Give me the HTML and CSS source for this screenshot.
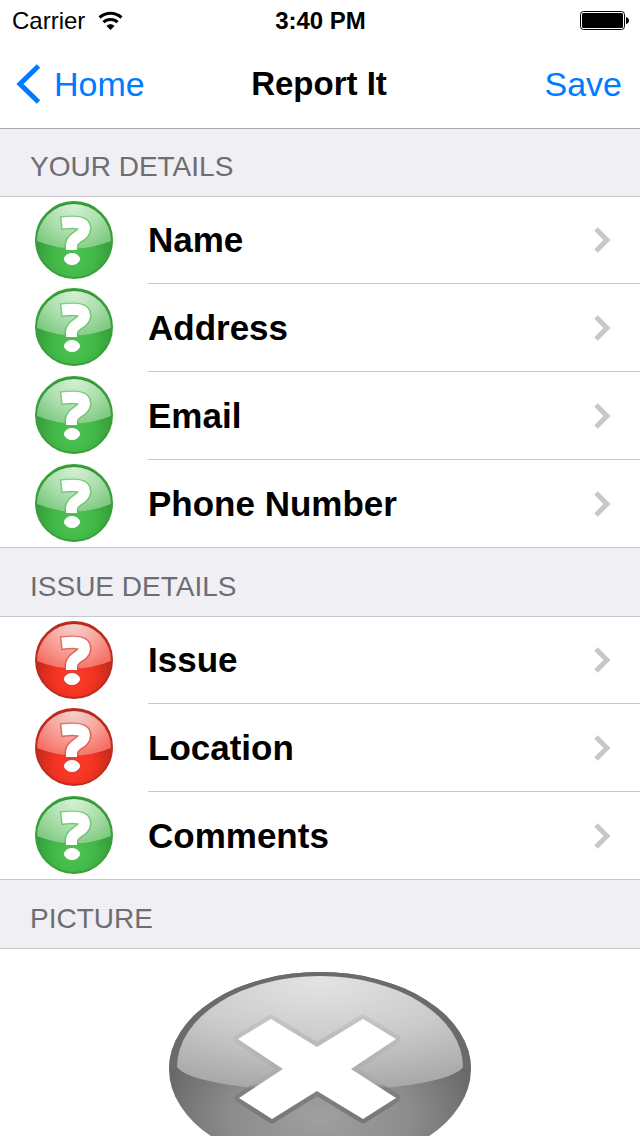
FILE: index.html
```
<!DOCTYPE html>
<html lang="en">
<head>
    <meta charset="UTF-8">
    <meta name="viewport" content="width=device-width, initial-scale=1.0">
    <title>Report It</title>
    <link rel="stylesheet" href="styles.css">
</head>
<body>
    <!-- Shared icons -->
    <svg class="defs" aria-hidden="true">
        <defs>
            <radialGradient id="greenBody" cx="50%" cy="72%" r="62%">
                <stop offset="0" stop-color="#4cc552"/>
                <stop offset="0.400" stop-color="#44ba49"/>
                <stop offset="1" stop-color="#2f9233"/>
            </radialGradient>
            <radialGradient id="greenGloss" gradientUnits="userSpaceOnUse" cx="39" cy="4" r="52">
                <stop offset="0" stop-color="#d5f1d5"/>
                <stop offset="0.500" stop-color="#aee0ae"/>
                <stop offset="1" stop-color="#78c67a"/>
            </radialGradient>
            <radialGradient id="redBody" cx="50%" cy="72%" r="62%">
                <stop offset="0" stop-color="#ff3d2a"/>
                <stop offset="0.400" stop-color="#f43322"/>
                <stop offset="1" stop-color="#b02619"/>
            </radialGradient>
            <radialGradient id="redGloss" gradientUnits="userSpaceOnUse" cx="39" cy="2" r="52">
                <stop offset="0" stop-color="#f2d2cf"/>
                <stop offset="0.500" stop-color="#f8a79f"/>
                <stop offset="1" stop-color="#f4695c"/>
            </radialGradient>
        </defs>
        <symbol id="mark" viewBox="0 0 78 78">
            <path d="M27 22C41 20.500 49.500 21 49.500 27.500C49.500 35 36.500 36 36.500 45V49" fill="none" stroke-width="11"/>
            <ellipse cx="37" cy="58" rx="7.500" ry="5.500"/>
        </symbol>
        <symbol id="outline" viewBox="0 0 78 78">
            <path d="M25.500 22.200C41 20.500 49.500 21 49.500 27.500C49.500 35 36.500 36 36.500 45V50.500" fill="none" stroke-width="14"/>
            <ellipse cx="37" cy="58" rx="9" ry="7"/>
        </symbol>
        <symbol id="green" viewBox="0 0 78 78">
            <circle cx="39" cy="39" r="38" fill="url(#greenBody)" stroke="#389f3b" stroke-width="2"/>
            <path d="M2 40A37 37 0 0 1 76 40Q39 55 2 40Z" fill="url(#greenGloss)"/>
            <use href="#outline" fill="#58ba5b" stroke="#58ba5b" opacity="0.6"/>
            <use href="#mark" fill="#fff" stroke="#fff"/>
        </symbol>
        <symbol id="red" viewBox="0 0 78 78">
            <circle cx="39" cy="39" r="38" fill="url(#redBody)" stroke="#bd2c20" stroke-width="2"/>
            <path d="M2 40A37 37 0 0 1 76 40Q39 55 2 40Z" fill="url(#redGloss)"/>
            <use href="#outline" fill="#cf4438" stroke="#cf4438" opacity="0.6"/>
            <use href="#mark" fill="#fff" stroke="#fff"/>
        </symbol>
        <symbol id="chevron" viewBox="0 0 18 26">
            <path d="M2 2L13 13L2 24" fill="none" stroke="#c7c7cc" stroke-width="5"/>
        </symbol>
    </svg>

    <div class="status">
        <div class="carrier">
            <span>Carrier</span>
            <svg width="25" height="20" viewBox="0 0 25 20" fill="none" stroke="#000" stroke-width="3">
                <path d="M1.500 6.500C8 0.800 17 0.800 23.500 6.500"/>
                <path d="M5.500 11.200C9 7.500 16 7.500 19.500 11.200"/>
                <path d="M12.500 19L8.500 15C10.500 12.500 14.500 12.500 16.500 15Z" fill="#000" stroke="none"/>
            </svg>
        </div>
        <span class="time">3:40 PM</span>
        <svg class="battery" width="49" height="20" viewBox="0 0 49 20">
            <rect x="0.500" y="0.500" width="44" height="18" rx="3" fill="none" stroke="#000"/>
            <rect x="2" y="2" width="41" height="15" rx="1.500"/>
            <path d="M46 6C50 7 50 12 46 13Z"/>
        </svg>
    </div>

    <header class="nav">
        <a href="#" class="back">
            <svg width="26" height="40" viewBox="0 0 26 40">
                <path d="M22.500 2L4 20L22.500 38" fill="none" stroke="#007aff" stroke-width="5"/>
            </svg>
            Home
        </a>
        <h1>Report It</h1>
        <button type="button" class="save">Save</button>
    </header>

    <main class="table">
        <h2>YOUR DETAILS</h2>
        <ul>
            <li><a href="#name"><svg class="icon"><use href="#green"/></svg><span class="label">Name<svg class="chevron"><use href="#chevron"/></svg></span></a></li>
            <li><a href="#address"><svg class="icon"><use href="#green"/></svg><span class="label">Address<svg class="chevron"><use href="#chevron"/></svg></span></a></li>
            <li><a href="#email"><svg class="icon"><use href="#green"/></svg><span class="label">Email<svg class="chevron"><use href="#chevron"/></svg></span></a></li>
            <li><a href="#phone"><svg class="icon"><use href="#green"/></svg><span class="label">Phone Number<svg class="chevron"><use href="#chevron"/></svg></span></a></li>
        </ul>

        <h2>ISSUE DETAILS</h2>
        <ul>
            <li><a href="#issue"><svg class="icon"><use href="#red"/></svg><span class="label">Issue<svg class="chevron"><use href="#chevron"/></svg></span></a></li>
            <li><a href="#location"><svg class="icon"><use href="#red"/></svg><span class="label">Location<svg class="chevron"><use href="#chevron"/></svg></span></a></li>
            <li><a href="#comments"><svg class="icon"><use href="#green"/></svg><span class="label">Comments<svg class="chevron"><use href="#chevron"/></svg></span></a></li>
        </ul>

        <h2>PICTURE</h2>
        <div class="picture">
            <svg width="304" height="196" viewBox="-1 -1 304 196" role="img" aria-label="No picture">
                <defs>
                    <radialGradient id="greyBody" cx="50%" cy="75%" r="60%">
                        <stop offset="0" stop-color="#a0a0a0"/>
                        <stop offset="0.500" stop-color="#8c8c8c"/>
                        <stop offset="1" stop-color="#606060"/>
                    </radialGradient>
                    <radialGradient id="greyGloss" cx="50%" cy="5%" r="100%">
                        <stop offset="0" stop-color="#e3e3e3"/>
                        <stop offset="0.500" stop-color="#cbcbcb"/>
                        <stop offset="1" stop-color="#a4a4a4"/>
                    </radialGradient>
                    <linearGradient id="crossEdge" gradientUnits="userSpaceOnUse" x1="0" y1="44" x2="0" y2="150">
                        <stop offset="0" stop-color="#c6c6c6"/>
                        <stop offset="0.640" stop-color="#a8a8a8"/>
                        <stop offset="0.680" stop-color="#828282"/>
                        <stop offset="1" stop-color="#777"/>
                    </linearGradient>
                </defs>
                <ellipse cx="151" cy="97" rx="151" ry="97" fill="url(#greyBody)"/>
                <path d="M0 97A151 97 0 0 1 302 97L294 97A143 92 0 0 0 8 97Z" fill="#6b6b6b"/>
                <path d="M8 95A143 91 0 0 1 294 95C284 110 215 119 151 119S18 110 8 95Z" fill="url(#greyGloss)"/>
                <path d="M102 47L148 75L194 47L227 67L182 97L227 126L194 147L148 119L103 147L70 126L114 97L69 67Z" fill="none" stroke="url(#crossEdge)" stroke-width="9" stroke-linejoin="round"/>
                <path d="M102 47L148 75L194 47L227 67L182 97L227 126L194 147L148 119L103 147L70 126L114 97L69 67Z" fill="#fff"/>
            </svg>
        </div>
    </main>
</body>
</html>
```
FILE: styles.css
```
* {
    box-sizing: border-box;
}

body {
    display: flex;
    flex-direction: column;
    height: 100vh;
    margin: 0;
    background-color: #fff;
    color: #000;
    font-family: "Liberation Sans", Arial, sans-serif;
}

svg {
    display: block;
    flex: none;
}

.defs {
    position: absolute;
    width: 0;
    height: 0;
}

/* Status bar */
.status {
    display: grid;
    grid-template-columns: 1fr auto 1fr;
    align-items: center;
    flex: none;
    height: 40px;
    padding: 2px 11px 0 12px;
    font-size: 24px;
}

.carrier {
    display: flex;
    align-items: center;
    gap: 13px;
}

.time {
    font-weight: bold;
}

.battery {
    justify-self: end;
}

/* Navigation bar, its hairline lies over the table */
.nav {
    display: grid;
    grid-template-columns: 1fr auto 1fr;
    align-items: center;
    flex: none;
    position: relative;
    height: 88px;
    padding: 0 18px 0 16px;
    box-shadow: 0 1px 0 #a7a7aa;
    font-size: 34px;
}

.nav h1 {
    margin: 0;
    font-size: 33px;
    line-height: 40px;
}

.back {
    display: flex;
    align-items: center;
    gap: 12px;
    color: #007aff;
    text-decoration: none;
}

.save {
    justify-self: end;
    padding: 0;
    border: none;
    background: none;
    color: #007aff;
    font: inherit;
    cursor: pointer;
}

/* Table */
.table {
    flex: 1;
    min-height: 0;
    overflow-y: auto;
    scrollbar-width: none;
}

h2 {
    margin: 0;
    padding: 23px 30px 13px;
    border-bottom: 1px solid #c8c7cc;
    background-color: #efeff4;
    color: #6d6d72;
    font-size: 28px;
    font-weight: normal;
    line-height: 32px;
}

ul {
    margin: 0;
    padding: 0;
    border-bottom: 1px solid #c8c7cc;
    list-style: none;
}

li a {
    display: flex;
    align-items: center;
    gap: 35px;
    padding-left: 35px;
    color: #000;
    text-decoration: none;
}

.icon {
    width: 78px;
    height: 78px;
    margin-bottom: 2px;
}

.label {
    display: flex;
    flex: 1;
    align-items: center;
    justify-content: space-between;
    height: 88px;
    padding-right: 28px;
    border-bottom: 1px solid #c8c7cc;
    font-size: 35px;
    font-weight: bold;
}

li:first-child .label {
    height: 87px;
}

li:last-child .label {
    height: 87px;
    border-bottom: none;
}

.chevron {
    width: 18px;
    height: 26px;
}

.picture {
    display: flex;
    justify-content: center;
    padding: 22px 0;
}
```
